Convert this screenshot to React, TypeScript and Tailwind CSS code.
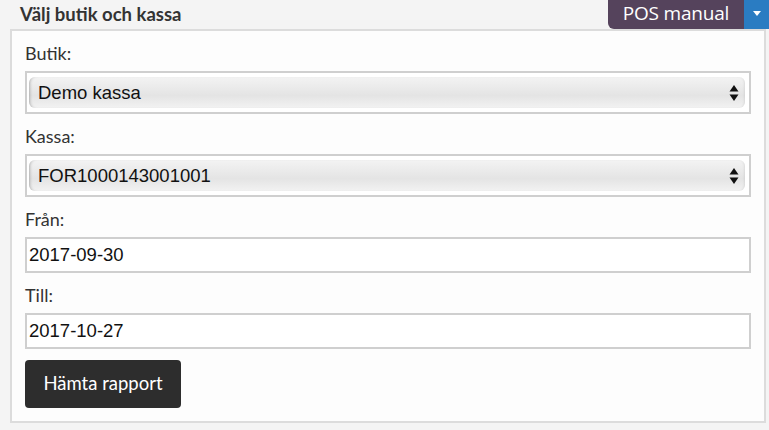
import React from 'react';

const SelectArrows = () => (
    <svg width="10" height="18" viewBox="0 0 10 18" className="shrink-0">
        <path d="M5 1 L9.5 7.5 L0.5 7.5 Z" fill="#111" />
        <path d="M5 17 L9.5 10.5 L0.5 10.5 Z" fill="#111" />
    </svg>
);

const FakeSelect = ({ value }: { value: string }) => (
    <div className="border-2 border-[#cfcfcf] bg-white pl-[2px] pr-[4px] pt-[4px] pb-[4px]">
        <div className="h-[31px] rounded-[6px] flex items-center justify-between pl-[9px] pr-[6px] bg-[linear-gradient(#f3f3f3,#e4e4e4_60%,#f2f2f2)] shadow-[inset_3px_0_3px_-2px_rgba(0,0,0,0.25),inset_-2px_0_3px_-2px_rgba(0,0,0,0.15)]">
            <span className="text-[18.5px] text-[#111] font-['Liberation_Sans',Arial,sans-serif]">
                {value}
            </span>
            <SelectArrows />
        </div>
    </div>
);

const DateInput = ({ value }: { value: string }) => (
    <div className="h-[36px] border-2 border-[#cfcfcf] bg-white flex items-center pl-[2px]">
        <span className="text-[18.5px] text-[#111] font-['Liberation_Sans',Arial,sans-serif]">
            {value}
        </span>
    </div>
);

const Label = ({ text, first }: { text: string; first?: boolean }) => (
    <div
        className={`h-[20px] leading-[20px] mb-2 text-[18px] text-[#333] ${first ? '' : 'mt-3'}`}
    >
        {text}
    </div>
);

export default function App() {
    return (
        <div className="w-[769px] h-[430px] bg-[#f4f4f4] font-['Lato',sans-serif] overflow-hidden">
            {/* rubrik + manualknapp */}
            <div className="h-[29px] flex items-center justify-between">
                <div className="pl-[20px] text-[18.5px] font-bold text-[#333]">
                    Välj butik och kassa
                </div>
                <div className="flex h-[29px] self-start">
                    <div className="w-[136px] h-full bg-[#55435c] rounded-bl-[6px] flex items-center justify-center text-white text-[19px] font-['Open_Sans',sans-serif] tracking-[-0.2px] pb-[3px]">
                        POS manual
                    </div>
                    <div className="w-[25px] h-full bg-[#2a7cc2] flex items-start justify-center pt-[11px]">
                        <svg width="8" height="5" viewBox="0 0 8 5">
                            <path d="M0 0 L8 0 L4 5 Z" fill="#fff" />
                        </svg>
                    </div>
                </div>
            </div>
            {/* panel */}
            <div className="ml-[10px] w-[756px] h-[394px] border-2 border-[#dcdcdc] bg-[#fdfdfd] px-[13px] pt-3">
                <Label text="Butik:" first />
                <FakeSelect value="Demo kassa" />
                <Label text="Kassa:" />
                <FakeSelect value="FOR1000143001001" />
                <Label text="Från:" />
                <DateInput value="2017-09-30" />
                <Label text="Till:" />
                <DateInput value="2017-10-27" />
                <button className="mt-[11px] w-[156px] h-[48px] rounded-[4px] bg-[#2d2d2d] text-white text-[18.5px] font-['Lato',sans-serif]">
                    Hämta rapport
                </button>
            </div>
        </div>
    );
}
